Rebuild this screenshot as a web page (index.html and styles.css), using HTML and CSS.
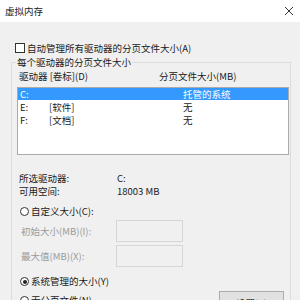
FILE: index.html
```html
<!DOCTYPE html>
<html lang="zh-CN">
<head>
    <meta charset="UTF-8">
    <title>虚拟内存</title>
    <link rel="stylesheet" href="styles.css">
</head>
<body>
    <div class="window">
        <div class="titlebar">
            <span class="title">虚拟内存</span>
            <svg class="close" width="10" height="10" viewBox="0 0 10 10">
                <path d="M1 1 L9 9 M9 1 L1 9" stroke="#333" stroke-width="1" fill="none"/>
            </svg>
        </div>
        <div class="content">
            <div class="check-row"><span class="checkbox"></span>自动管理所有驱动器的分页文件大小(A)</div>
            <fieldset class="group">
                <legend>每个驱动器的分页文件大小</legend>
                <div class="list-head">
                    <span>驱动器 [卷标](D)</span>
                    <span>分页文件大小(MB)</span>
                </div>
                <div class="listbox">
                    <div class="row selected"><span>C:</span><span></span><span>托管的系统</span></div>
                    <div class="row"><span>E:</span><span>[软件]</span><span>无</span></div>
                    <div class="row"><span>F:</span><span>[文档]</span><span>无</span></div>
                </div>
                <div class="info">
                    <span>所选驱动器:</span><span>C:</span>
                    <span>可用空间:</span><span>18003 MB</span>
                </div>
                <div class="radio-row custom"><span class="radio"></span>自定义大小(C):</div>
                <div class="field first">
                    <span class="field-label">初始大小(MB)(I):</span>
                    <span class="textbox"></span>
                </div>
                <div class="field">
                    <span class="field-label">最大值(MB)(X):</span>
                    <span class="textbox"></span>
                </div>
                <div class="radio-row system"><span class="radio checked"></span>系统管理的大小(Y)</div>
                <div class="bottom-row">
                    <div class="radio-row none"><span class="radio"></span>无分页文件(N)</div>
                    <button type="button">设置(S)</button>
                </div>
            </fieldset>
        </div>
    </div>
</body>
</html>
```

FILE: styles.css
```css
html, body {
    margin: 0;
    padding: 0;
}

body {
    width: 300px;
    height: 300px;
    overflow: hidden;
    background: #f0f0f0;
    font-family: "Noto Sans CJK SC", "Liberation Sans", sans-serif;
    font-size: 9.5px;
    color: #1a1a1a;
}

.titlebar {
    height: 22px;
    background: #fff;
    display: flex;
    align-items: center;
    justify-content: space-between;
    padding: 0 6px 0 5px;
}

.title {
    line-height: 12px;
    color: #222;
}

.close {
    display: block;
    margin-top: -1px;
}

.check-row {
    margin: 20px 0 0 15px;
    height: 12px;
    line-height: 12px;
    display: flex;
    align-items: center;
}

.checkbox {
    width: 8px;
    height: 8px;
    border: 1px solid #333;
    background: #fff;
    margin-right: 2px;
}

.group {
    margin: 3px 9px 0 11px;
    padding: 3px 1px 0 5px;
    border: 1px solid #dcdcdc;
    border-bottom: none;
}

.group legend {
    padding: 0 1px;
    margin-left: -1px;
    line-height: 10px;
    height: 10px;
}

.list-head {
    display: grid;
    grid-template-columns: 140px 1fr;
    line-height: 12px;
    padding-left: 2px;
}

.listbox {
    margin-top: 5px;
    height: 66px;
    background: #fff;
    border: 1px solid #ababab;
}

.row {
    display: grid;
    grid-template-columns: 29px 134px 1fr;
    height: 13px;
    line-height: 13px;
    padding-left: 2px;
}

.row.selected {
    background: #3399ff;
    color: #fff;
    height: 12px;
    line-height: 12px;
    margin-bottom: 1px;
}

.info {
    margin-top: 17px;
    display: grid;
    grid-template-columns: 98px 1fr;
    line-height: 13px;
    padding-left: 2px;
}

.radio-row {
    display: flex;
    align-items: center;
    line-height: 13px;
    height: 13px;
    padding-left: 3px;
}

.radio {
    width: 7px;
    height: 7px;
    border: 1px solid #333;
    border-radius: 50%;
    background: #fff;
    margin-right: 2px;
    position: relative;
}

.radio.checked::after {
    content: "";
    position: absolute;
    left: 1.5px;
    top: 1.5px;
    width: 4px;
    height: 4px;
    border-radius: 50%;
    background: #222;
}

.custom {
    margin-top: 7px;
}

.field {
    display: grid;
    grid-template-columns: 95px 67px;
    align-items: center;
    margin-top: 3px;
    padding-left: 4px;
}

.field.first {
    margin-top: 2px;
}

.field-label {
    color: #9a9a9a;
}

.textbox {
    height: 20px;
    border: 1px solid #d6d6d6;
    background: #f0f0f0;
}

.system {
    margin-top: 8px;
}

.bottom-row {
    display: flex;
    justify-content: space-between;
    align-items: flex-start;
    margin-top: 3px;
}

.none {
    margin-top: 3px;
}

button {
    width: 65px;
    height: 23px;
    margin-right: 5px;
    padding: 0;
    font: inherit;
    color: #1a1a1a;
    background: #e1e1e1;
    border: 1px solid #adadad;
}
```
